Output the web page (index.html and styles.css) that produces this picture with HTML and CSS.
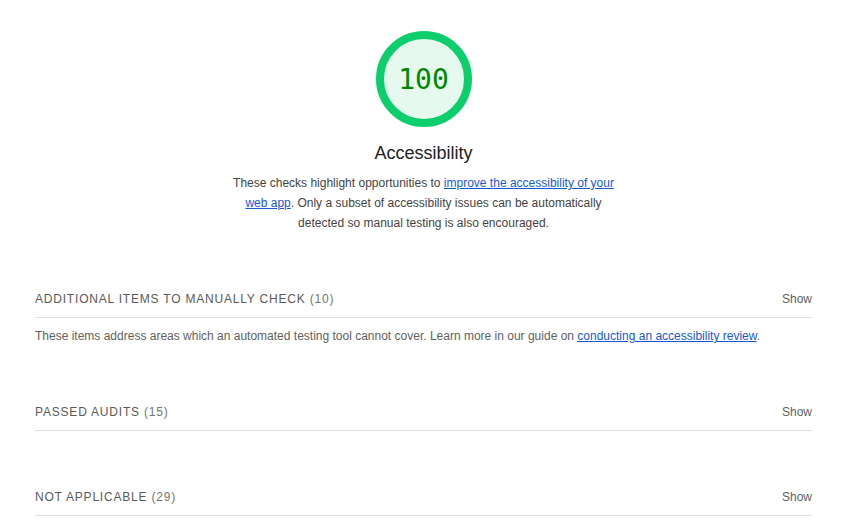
FILE: index.html
```html
<!DOCTYPE html>
<html lang="en">
<head>
<meta charset="utf-8">
<title>Accessibility</title>
<link rel="stylesheet" href="styles.css">
</head>
<body>
<div class="category">
  <div class="category-header">
    <div class="gauge">
      <svg viewBox="0 0 96 96" width="96" height="96">
        <circle cx="48" cy="48" r="44" fill="#e6f9ef" stroke="#0cce6b" stroke-width="8"/>
      </svg>
      <div class="gauge-score">100</div>
    </div>
    <div class="gauge-label">Accessibility</div>
    <p class="category-description">These checks highlight opportunities to <a href="#">improve the accessibility of your web app</a>. Only a subset of accessibility issues can be automatically detected so manual testing is also encouraged.</p>
  </div>

  <div class="groups">
    <section class="group">
      <div class="group-header">
        <span class="group-title">Additional items to manually check <span class="group-count">(10)</span></span>
        <span class="group-toggle">Show</span>
      </div>
      <p class="group-description">These items address areas which an automated testing tool cannot cover. Learn more in our guide on <a href="#">conducting an accessibility review</a>.</p>
    </section>

    <section class="group">
      <div class="group-header">
        <span class="group-title">Passed audits <span class="group-count">(15)</span></span>
        <span class="group-toggle">Show</span>
      </div>
    </section>

    <section class="group">
      <div class="group-header">
        <span class="group-title">Not applicable <span class="group-count">(29)</span></span>
        <span class="group-toggle">Show</span>
      </div>
    </section>
  </div>
</div>
</body>
</html>
```

FILE: styles.css
```css
* {
  box-sizing: border-box;
}

html, body {
  margin: 0;
  padding: 0;
  background: #ffffff;
}

body {
  font-family: "Liberation Sans", Arial, sans-serif;
  color: #212121;
}

.category {
  padding: 31px 45px 0 35px;
}

.category-header {
  display: flex;
  flex-direction: column;
  align-items: center;
}

.gauge {
  position: relative;
  width: 96px;
  height: 96px;
}

.gauge svg {
  display: block;
}

.gauge-score {
  position: absolute;
  inset: 0;
  display: flex;
  align-items: center;
  justify-content: center;
  font-family: "DejaVu Sans Mono", "Liberation Mono", monospace;
  font-size: 28px;
  color: #008800;
}

.gauge-label {
  margin-top: 14px;
  font-size: 18px;
  line-height: 24px;
  color: #212121;
}

.category-description {
  margin: 8px 0 0;
  max-width: 400px;
  font-size: 12px;
  line-height: 20px;
  text-align: center;
  color: #444444;
}

a {
  color: #1a57d6;
  text-decoration: underline;
}

.groups {
  display: flex;
  flex-direction: column;
  gap: 48px;
  margin-top: 48px;
}

.group-header {
  display: flex;
  justify-content: space-between;
  align-items: center;
  padding: 8px 0;
  line-height: 20px;
  border-bottom: 1px solid #e0e0e0;
}

.group-title {
  font-size: 12px;
  text-transform: uppercase;
  letter-spacing: 0.8px;
  color: #5a5a5a;
}

.group-count {
  color: #757575;
}

.group-toggle {
  font-size: 12px;
  color: #616161;
}

.group-description {
  margin: 8px 0 0;
  font-size: 12px;
  line-height: 20px;
  color: #616161;
}
```
